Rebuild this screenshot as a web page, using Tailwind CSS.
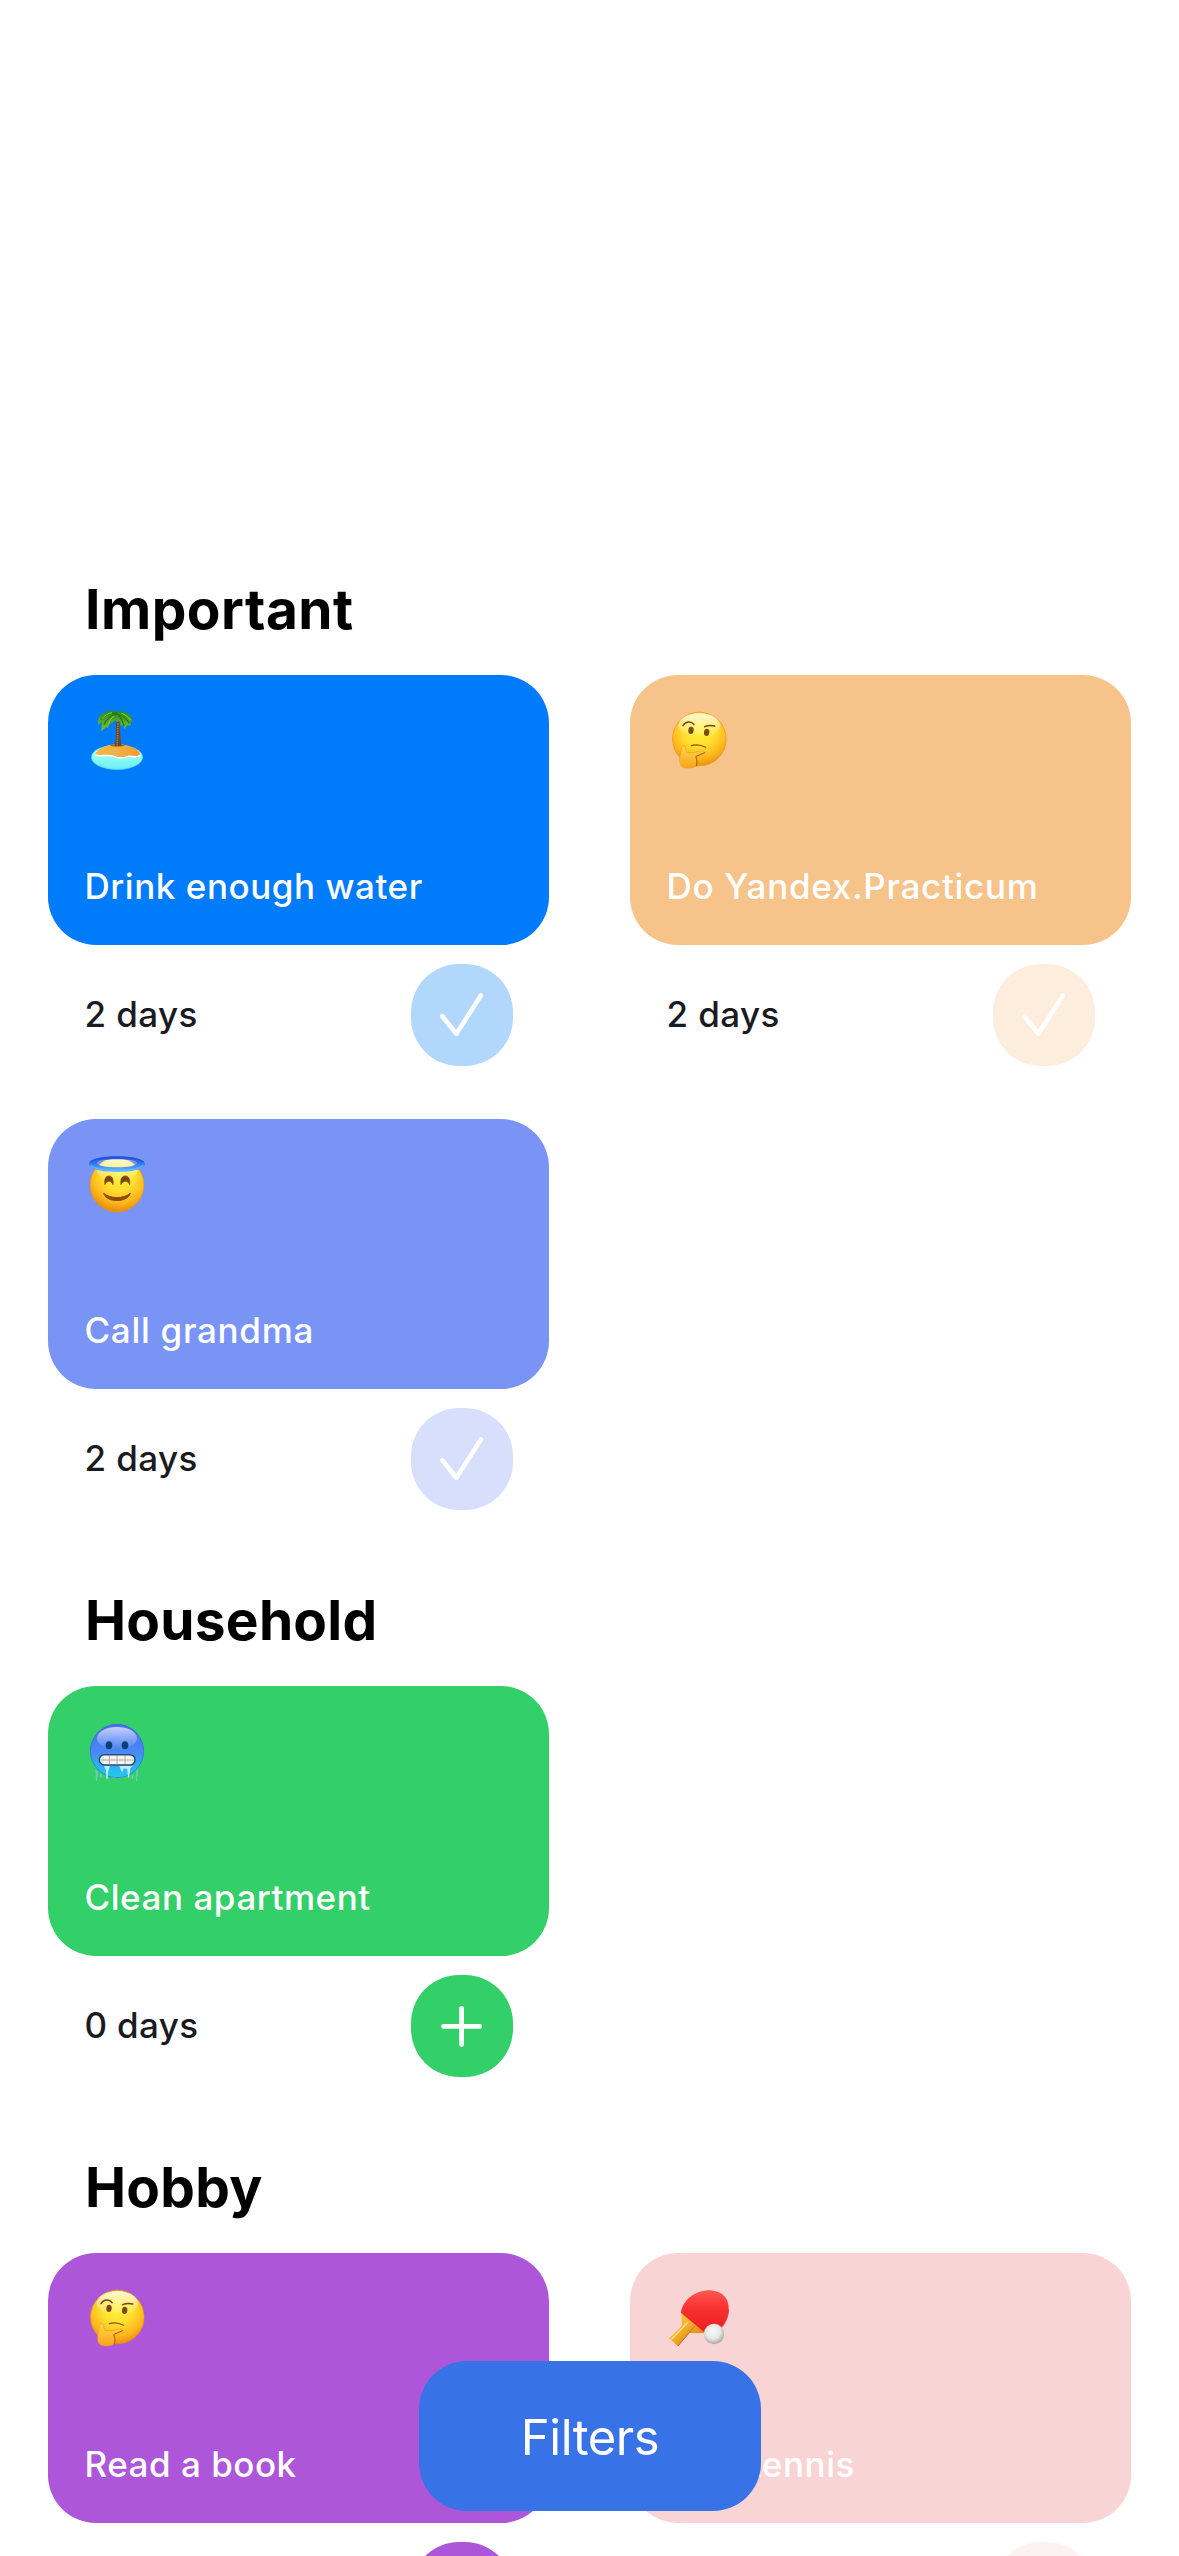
<!DOCTYPE html>
<html lang="en">
<head>
<meta charset="utf-8">
<title>Trackers</title>
<script src="https://cdn.jsdelivr.net/npm/@tailwindcss/browser@4"></script>
</head>
<body class="bg-white">
<svg class="absolute h-0 w-0" aria-hidden="true">
  <defs>
    <radialGradient id="face" gradientUnits="userSpaceOnUse" cx="118" cy="88" r="108">
      <stop offset="0" stop-color="#fff03a"/><stop offset=".45" stop-color="#ffdf30"/><stop offset=".8" stop-color="#fdb51c"/><stop offset="1" stop-color="#ec920e"/>
    </radialGradient>
    <linearGradient id="shine" x1="0" y1="0" x2="0" y2="1">
      <stop offset="0" stop-color="#fff" stop-opacity=".8"/><stop offset="1" stop-color="#fff" stop-opacity="0"/>
    </linearGradient>
    <linearGradient id="hand" x1="0" y1="0" x2="0" y2="1">
      <stop offset="0" stop-color="#ffd84a"/><stop offset="1" stop-color="#f9a31c"/>
    </linearGradient>
    <linearGradient id="cold" x1="0" y1="0" x2="0" y2="1">
      <stop offset="0" stop-color="#4a6cf6"/><stop offset=".5" stop-color="#4a86f2"/><stop offset=".78" stop-color="#2fb0f0"/><stop offset="1" stop-color="#1fcdec"/>
    </linearGradient>
    <linearGradient id="sea" x1="0" y1="0" x2="0" y2="1">
      <stop offset="0" stop-color="#c9fff0"/><stop offset=".6" stop-color="#84fbf0"/><stop offset="1" stop-color="#6fe6fb"/>
    </linearGradient>
    <linearGradient id="sand" x1="0" y1="0" x2="1" y2="0">
      <stop offset="0" stop-color="#f6b93e"/><stop offset=".5" stop-color="#eeb04a"/><stop offset="1" stop-color="#f5962a"/>
    </linearGradient>
    <linearGradient id="leaf" x1="0" y1="0" x2="0" y2="1">
      <stop offset="0" stop-color="#2c8a1c"/><stop offset="1" stop-color="#7cc62c"/>
    </linearGradient>
    <linearGradient id="halo" x1="0" y1="0" x2="0" y2="1">
      <stop offset="0" stop-color="#1f55e0"/><stop offset=".5" stop-color="#2f7df2"/><stop offset="1" stop-color="#6cc4ff"/>
    </linearGradient>
    <linearGradient id="rubber" x1="0" y1="0" x2="0" y2="1">
      <stop offset="0" stop-color="#ff5a52"/><stop offset=".4" stop-color="#f93232"/><stop offset="1" stop-color="#ee1a1c"/>
    </linearGradient>
    <linearGradient id="wood" x1="0" y1="0" x2="1" y2="1">
      <stop offset="0" stop-color="#ffd24e"/><stop offset=".5" stop-color="#f4a828"/><stop offset="1" stop-color="#c57b16"/>
    </linearGradient>
    <radialGradient id="ball" cx=".45" cy=".38" r=".62">
      <stop offset="0" stop-color="#fafafa"/><stop offset=".6" stop-color="#e6e6e4"/><stop offset="1" stop-color="#a8a6a4"/>
    </radialGradient>
    <symbol id="check" viewBox="0 0 102 102"><path d="M31.3 52.2 45.4 69.8 69.9 31.4" fill="none" stroke="#fff" stroke-width="4.6" stroke-linecap="round" stroke-linejoin="round"/></symbol>
    <symbol id="plus" viewBox="0 0 102 102"><path d="M32.5 51.4H68.7M50.6 33.3V69.5" fill="none" stroke="#fff" stroke-width="4.8" stroke-linecap="round"/></symbol>
    <symbol id="thinking" viewBox="0 0 240 240">
      <circle cx="118" cy="117" r="80.5" fill="url(#face)" stroke="#e9920f" stroke-width="2"/>
      <ellipse cx="118" cy="76" rx="62" ry="36" fill="url(#shine)"/>
      <path d="M69 77C76 65 92 61 102 74" fill="none" stroke="#7a4209" stroke-width="4.5" stroke-linecap="round"/>
      <path d="M134 80C144 76 154 75 164 78" fill="none" stroke="#7a4209" stroke-width="4.5" stroke-linecap="round"/>
      <ellipse cx="93" cy="91" rx="8" ry="11" fill="#7c4708" transform="rotate(8 93 91)"/>
      <ellipse cx="140" cy="97" rx="8" ry="11" fill="#7c4708" transform="rotate(8 140 97)"/>
      <path d="M94 137C106 133 124 135 137 142" fill="none" stroke="#8a5209" stroke-width="3.5" stroke-linecap="round"/>
      <path d="M64 142C66 135 75 136 77 145C78 152 78 157 82 158C95 161 117 153 131 152C138 153 137 160 128 163L108 169C111 175 112 182 110 190C110 200 102 204 84 204C67 204 60 198 59 183C58 168 65 158 64 142Z" fill="url(#hand)" stroke="#e8940f" stroke-width="1.5"/>
      <path d="M134 158 108 169M108 172C112 180 111 190 109 198" fill="none" stroke="#a85f06" stroke-width="3" stroke-linecap="round"/>
    </symbol>
  </defs>
</svg>

<main class="relative h-[2556px] w-[1179px] overflow-hidden pt-[552px] font-['Inter',sans-serif] text-[35px] leading-[54px] font-medium tracking-[0.55px] text-[#1a1b22]">

  <section>
    <h2 class="h-[123px] pt-6 pl-[85px] text-[55px] leading-[66px] font-bold tracking-[0.5px] text-black">Important</h2>
    <div class="grid grid-cols-[501px_501px] gap-x-[81px] pl-12">
      <article class="h-[444px]">
        <div class="flex h-[270px] flex-col justify-between rounded-[48px] bg-[#007bfa] pt-[25px] pb-8 pl-[36.5px] text-white">
          <svg class="-ml-[4.5px] size-20" viewBox="0 0 240 240" role="img" aria-label="Desert island">
            <ellipse cx="111" cy="172" rx="77" ry="37" fill="url(#sea)" stroke="#47c8f5" stroke-width="1.5"/>
            <path d="M46 165C50 146 78 133 112 133C148 133 176 147 181 164C170 175 158 168 144 169C128 176 116 175 102 169C82 162 64 170 46 165Z" fill="url(#sand)"/>
            <path d="M45 165C62 171 82 162 102 169C118 176 130 176 144 169C158 168 170 175 181 165" fill="none" stroke="#fff" stroke-width="4.5"/>
            <ellipse cx="112" cy="136" rx="22" ry="4" fill="#9a6a2a"/>
            <path d="M107 66 119 66C119 92 123 116 124 138L105 138C108 114 109 90 107 66Z" fill="#6d4a2a"/>
            <path d="M114 70C113 94 113 116 111 137" stroke="#a98454" stroke-width="4" stroke-dasharray="4 3" fill="none"/>
            <path d="M110 36C94 29 74 33 62 46C53 53 52 64 56 75L66 64L64 94L78 82L84 84L91 67L94 71L106 61L112 66L120 62L122 77L130 76L133 88L140 77L143 76L153 76L151 62L158 66C156 53 151 44 140 39C130 33 118 33 110 36Z" fill="url(#leaf)"/>
            <path d="M110 42C94 46 80 54 72 74M110 42C126 46 139 54 148 70M110 40C98 38 78 42 62 58M112 42C120 50 128 62 132 78" fill="none" stroke="#2a761a" stroke-width="3.5"/>
            <path d="M96 38C84 40 74 46 66 56M124 40C134 42 144 50 150 60M102 48C94 54 88 62 86 72" fill="none" stroke="#8ed43c" stroke-width="3"/>
          </svg>
          <p>Drink enough water</p>
        </div>
        <div class="mt-[19px] flex items-center justify-between pr-9 pl-[36.5px]">
          <p class="pb-0.5 tracking-[0.4px]">2 days</p>
          <button class="size-[102px] rounded-[48px] bg-[#007bfa]/30"><svg class="size-full"><use href="#check"/></svg></button>
        </div>
      </article>
      <article class="h-[444px]">
        <div class="flex h-[270px] flex-col justify-between rounded-[48px] bg-[#f6c48b] pt-[25px] pb-8 pl-[36.5px] text-white">
          <svg class="-ml-[6.5px] size-20" role="img" aria-label="Thinking face"><use href="#thinking"/></svg>
          <p class="tracking-[0.7px]">Do Yandex.Practicum</p>
        </div>
        <div class="mt-[19px] flex items-center justify-between pr-9 pl-[36.5px]">
          <p class="pb-0.5 tracking-[0.4px]">2 days</p>
          <button class="size-[102px] rounded-[48px] bg-[#f6c48b]/30"><svg class="size-full"><use href="#check"/></svg></button>
        </div>
      </article>
      <article class="h-[444px]">
        <div class="flex h-[270px] flex-col justify-between rounded-[48px] bg-[#7994f5] pt-[26px] pb-8 pl-[36.5px] text-white">
          <svg class="-ml-[4.5px] size-20" viewBox="0 0 240 240" role="img" aria-label="Smiling face with halo">
            <circle cx="111" cy="120" r="81" fill="url(#face)" stroke="#e9920f" stroke-width="2"/>
            <ellipse cx="111" cy="76" rx="60" ry="36" fill="url(#shine)"/>
            <path fill-rule="evenodd" d="M27 57C27 42 64 34 111 34S195 42 195 57S158 81 111 81S27 72 27 57ZM51 54C51 62 78 67 111 67S171 62 171 54S144 43 111 43S51 46 51 54Z" fill="url(#halo)"/>
            <path d="M32 59C40 82 182 82 190 59" fill="none" stroke="#62b8ff" stroke-width="4" opacity=".8"/>
            <path d="M31 52C44 33 178 33 191 52" fill="none" stroke="#2050d8" stroke-width="3"/>
            <path d="M75 119C72 100 78 93 87 93S101 101 99 119C94 105 80 105 75 119ZM123 119C120 100 127 93 136 93S151 101 149 119C144 105 129 105 123 119Z" fill="#7e4708" stroke="#7e4708" stroke-width="2" stroke-linejoin="round"/>
            <path d="M71 145C91 162 131 162 151 145C142 174 80 174 71 145Z" fill="#8a4b06" stroke="#8a4b06" stroke-width="3" stroke-linejoin="round"/>
          </svg>
          <p class="tracking-[0.7px]">Call grandma</p>
        </div>
        <div class="mt-[19px] flex items-center justify-between pr-9 pl-[36.5px]">
          <p class="pb-0.5 tracking-[0.4px]">2 days</p>
          <button class="size-[102px] rounded-[48px] bg-[#7994f5]/30"><svg class="size-full"><use href="#check"/></svg></button>
        </div>
      </article>
    </div>
  </section>

  <section>
    <h2 class="h-[123px] pt-6 pl-[85px] text-[55px] leading-[66px] font-bold tracking-[0.25px] text-black">Household</h2>
    <div class="grid grid-cols-[501px_501px] gap-x-[81px] pl-12">
      <article class="h-[444px]">
        <div class="flex h-[270px] flex-col justify-between rounded-[48px] bg-[#33cf69] pt-[29px] pb-8 pl-[36.5px] text-white">
          <svg class="-ml-[4.5px] size-20" viewBox="0 0 240 240" role="img" aria-label="Cold face">
            <circle cx="111" cy="108" r="80" fill="url(#cold)" stroke="#3a5ef0" stroke-width="2"/>
            <ellipse cx="111" cy="70" rx="60" ry="34" fill="url(#shine)" opacity=".85"/>
            <ellipse cx="87" cy="91" rx="10" ry="12" fill="#0d3f74"/>
            <ellipse cx="135" cy="91" rx="10" ry="12" fill="#0d3f74"/>
            <rect x="58" y="119" width="107" height="31" rx="15" fill="#f6f1ee" stroke="#20527a" stroke-width="4.5"/>
            <path d="M61 135H162M88 121V148M111 121V148M135 121V148" stroke="#a79c98" stroke-width="2.5"/>
            <path d="M72 153 90 153 85 168 83 192H79L78 166ZM118 153H158L151 160 147 188H144L142 162 131 160 127 172 124 168Z" fill="#c3e9fd"/>
            <path d="M46 162 54 170 51 198H48ZM60 175 67 180 64 190H62ZM168 170 175 160 171 198H168ZM154 182 161 178 159 193H156ZM96 186C106 190 118 190 128 186L122 190H100Z" fill="#86c8d8" opacity=".75"/>
          </svg>
          <p>Clean apartment</p>
        </div>
        <div class="mt-[19px] flex items-center justify-between pr-9 pl-[36.5px]">
          <p class="pb-0.5 tracking-[0.35px]">0 days</p>
          <button class="size-[102px] rounded-[48px] bg-[#33cf69]"><svg class="size-full"><use href="#plus"/></svg></button>
        </div>
      </article>
    </div>
  </section>

  <section>
    <h2 class="h-[123px] pt-6 pl-[85px] text-[55px] leading-[66px] font-bold tracking-[0.25px] text-black">Hobby</h2>
    <div class="grid grid-cols-[501px_501px] gap-x-[81px] pl-12">
      <article class="h-[444px]">
        <div class="flex h-[270px] flex-col justify-between rounded-[48px] bg-[#ad56da] pt-[25px] pb-8 pl-[36.5px] text-white">
          <svg class="-ml-[6.5px] size-20" role="img" aria-label="Thinking face"><use href="#thinking"/></svg>
          <p class="tracking-[0.5px]">Read a book</p>
        </div>
        <div class="mt-[19px] flex justify-end pr-9">
          <button class="size-[102px] rounded-[48px] bg-[#ad56da]"><svg class="size-full"><use href="#plus"/></svg></button>
        </div>
      </article>
      <article class="h-[444px]">
        <div class="flex h-[270px] flex-col justify-between rounded-[48px] bg-[#f9d4d4] pt-[27px] pb-8 pl-[36.5px] text-white">
          <svg class="-ml-[6.5px] size-20" viewBox="0 0 240 240" role="img" aria-label="Ping pong">
            <path d="M64 96 135 159 100 160C92 159 88 158 82 164L55 198 28 175 63 143C68 138 65 128 65 118Z" fill="url(#wood)"/>
            <path d="M82 121 104 139 54 198 28 175Z" fill="url(#wood)"/>
            <path d="M84 126 34 178" stroke="#ffe07a" stroke-width="5"/>
            <path d="M104 139 54 198" stroke="#b87414" stroke-width="3"/>
            <path d="M63 98C68 60 106 30 152 31C190 33 208 60 206 88C205 112 195 130 184 142L136 160Z" fill="url(#rubber)"/>
            <path d="M206 88C205 112 195 132 184 144" stroke="#b03a36" stroke-width="2" fill="none"/>
            <circle cx="162" cy="162" r="30.5" fill="url(#ball)"/>
          </svg>
          <p class="tracking-[0.6px]">Play tennis</p>
        </div>
        <div class="mt-[19px] flex justify-end pr-9">
          <button class="size-[102px] rounded-[48px] bg-[#f9d4d4]/30"><svg class="size-full"><use href="#check"/></svg></button>
        </div>
      </article>
    </div>
  </section>

  <button class="absolute top-[2361px] left-[419px] h-[150px] w-[342px] rounded-[48px] bg-[#3772e7] pt-[3px] text-[49px] leading-[60px] font-normal tracking-[-0.5px] text-white">Filters</button>
</main>
</body>
</html>
